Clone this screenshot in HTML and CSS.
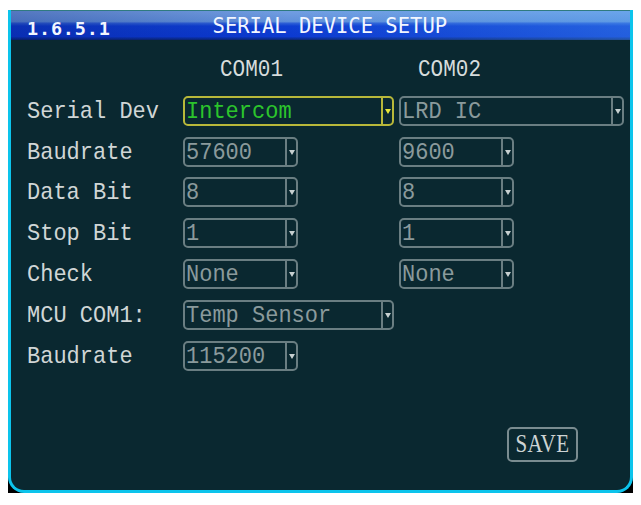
FILE: index.html
```html
<!DOCTYPE html>
<html>
<head>
<meta charset="utf-8">
<link rel="stylesheet" href="styles.css">
</head>
<body>
<div class="frame">
  <div class="panel">
    <div class="titlebar">
      <span class="code">1.6.5.1</span>
      <span class="heading">SERIAL DEVICE SETUP</span>
    </div>
    <div class="content">
      <div class="grid">
        <div></div>
        <div class="colhead c1">COM01</div>
        <div class="colhead c2">COM02</div>

        <div class="label">Serial Dev</div>
        <div class="select wide active"><span class="val">Intercom</span><span class="arrow"></span></div>
        <div class="select full"><span class="val">LRD IC</span><span class="arrow"></span></div>

        <div class="label">Baudrate</div>
        <div class="select"><span class="val">57600</span><span class="arrow"></span></div>
        <div class="select"><span class="val">9600</span><span class="arrow"></span></div>

        <div class="label">Data Bit</div>
        <div class="select"><span class="val">8</span><span class="arrow"></span></div>
        <div class="select"><span class="val">8</span><span class="arrow"></span></div>

        <div class="label">Stop Bit</div>
        <div class="select"><span class="val">1</span><span class="arrow"></span></div>
        <div class="select"><span class="val">1</span><span class="arrow"></span></div>

        <div class="label">Check</div>
        <div class="select"><span class="val">None</span><span class="arrow"></span></div>
        <div class="select"><span class="val">None</span><span class="arrow"></span></div>

        <div class="label">MCU COM1:</div>
        <div class="select wide"><span class="val">Temp Sensor</span><span class="arrow"></span></div>
        <div></div>

        <div class="label">Baudrate</div>
        <div class="select"><span class="val">115200</span><span class="arrow"></span></div>
        <div></div>
      </div>
      <div class="footer">
        <div class="save"><span>SAVE</span></div>
      </div>
    </div>
  </div>
</div>
</body>
</html>
```

FILE: styles.css
```css
html, body {
  margin: 0;
  padding: 0;
  background: #ffffff;
}

.frame {
  margin: 10px 0 0 8px;
  width: 625px;
  height: 483px;
  background: #000000;
}

.panel {
  box-sizing: border-box;
  width: 625px;
  height: 483px;
  background: #0a2830;
  border: 3px solid #0cc4ec;
  border-top: none;
  border-radius: 0 0 16px 16px;
  overflow: hidden;
}

.titlebar {
  box-sizing: border-box;
  height: 30px;
  border-top: 1px solid #2f7a80;
  display: flex;
  align-items: flex-start;
  background:
    linear-gradient(to right, rgba(0, 8, 90, 0.25), rgba(0, 0, 0, 0) 45%, rgba(90, 180, 255, 0.3)),
    linear-gradient(to bottom, #729ee2 0%, #6090da 36%, #2a5cd6 43%, #0e3ed2 52%, #0c3ad0 88%, #0a2670 100%);
  color: #f2f6ff;
  font-family: "DejaVu Sans Mono", monospace;
}

.code {
  font-size: 18.5px;
  line-height: 18.5px;
  letter-spacing: 0.8px;
  font-weight: bold;
  margin: 9px 0 0 16px;
}

.heading {
  font-size: 20.5px;
  line-height: 20.5px;
  margin: 5px 0 0 102px;
  transform: scaleY(1.06);
}

.content {
  padding: 15px 0 0 16px;
}

.grid {
  display: grid;
  grid-template-columns: 151px 211px 225px;
  grid-auto-rows: 30px;
  column-gap: 5px;
  row-gap: 10.8px;
  font-family: "Liberation Mono", monospace;
}

.colhead {
  font-size: 21px;
  line-height: 30px;
  color: #d6dcdc;
  transform: scaleY(1.1);
}
.colhead.c1 { padding-left: 37px; }
.colhead.c2 { padding-left: 19px; }

.label {
  font-size: 22px;
  line-height: 30px;
  color: #d0d6d6;
  white-space: nowrap;
  transform: translateY(1px) scaleY(1.1);
}

.select {
  box-sizing: border-box;
  width: 115px;
  height: 30px;
  border: 2px solid #6a7e82;
  border-radius: 5px;
  display: flex;
}
.select.wide { width: 211px; }
.select.full { width: 225px; }

.val {
  flex: 1;
  padding-left: 1px;
  font-size: 22px;
  line-height: 26px;
  color: #8a9a9c;
  white-space: nowrap;
  overflow: hidden;
  transform: translateY(1px) scaleY(1.1);
}

.arrow {
  width: 9px;
  border-left: 2px solid #6a7e82;
  display: flex;
  justify-content: center;
  align-items: flex-start;
}
.arrow::after {
  content: "";
  margin-top: 11px;
  border-left: 3.5px solid transparent;
  border-right: 3.5px solid transparent;
  border-top: 5px solid #c6d0d0;
}

.select.active {
  border-color: #b8b83a;
}
.select.active .val {
  color: #2cc42c;
}
.select.active .arrow {
  border-left-color: #b8b83a;
}
.select.active .arrow::after {
  border-top-color: #e6e63a;
}

.footer {
  display: flex;
  justify-content: flex-end;
  padding-right: 52px;
  margin-top: 56px;
}

.save {
  box-sizing: border-box;
  width: 71px;
  height: 35px;
  border: 2px solid #7a8c90;
  border-radius: 5px;
  display: flex;
  align-items: center;
  justify-content: center;
  font-family: "Liberation Serif", serif;
  font-size: 21px;
  color: #cdd4d4;
  letter-spacing: 0.5px;
}
.save span {
  display: inline-block;
  transform: scaleY(1.15);
}
```
